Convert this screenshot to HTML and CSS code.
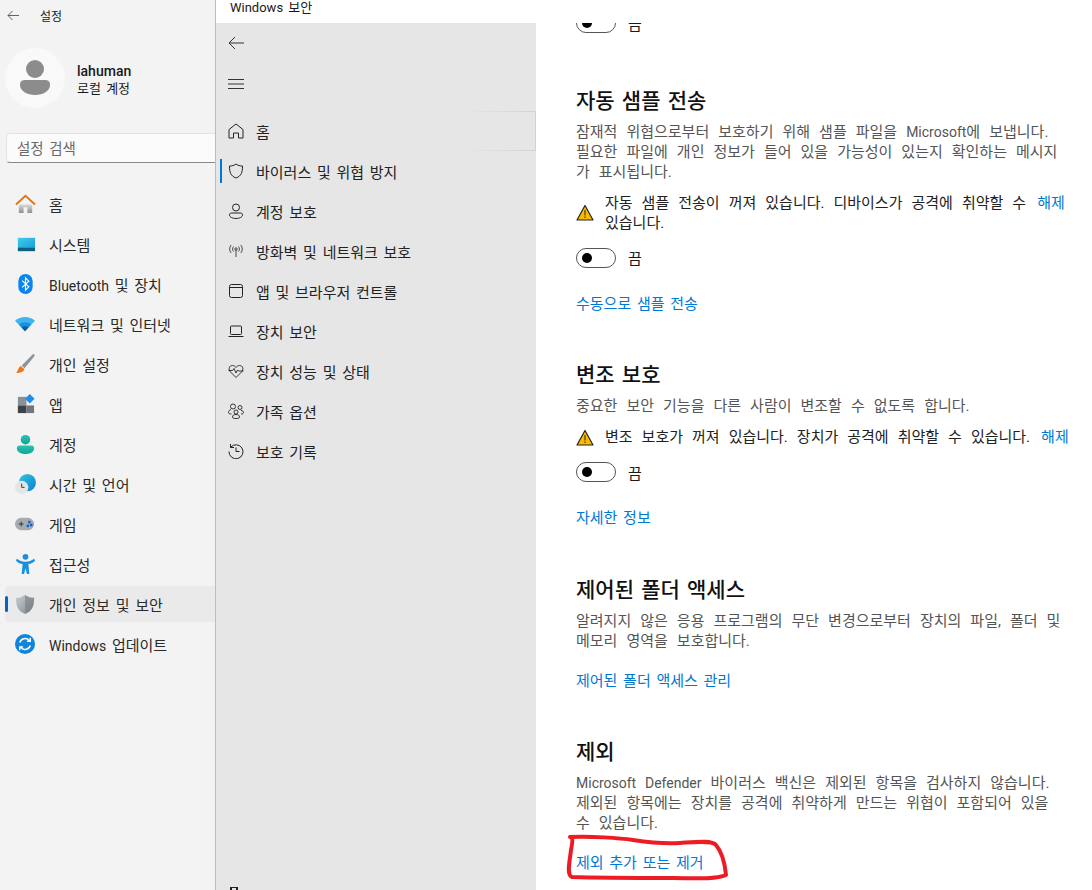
FILE: index.html
```html
<!DOCTYPE html>
<html lang="ko">
<head>
  <meta charset="UTF-8" />
  <title>Windows 보안</title>
  <link rel="stylesheet" href="styles.css">
</head>
<body>
  <svg class="defs" width="0" height="0">
    <defs>
      <linearGradient id="gHome" x1="0" y1="0" x2="0" y2="1"><stop offset="0" stop-color="#d9d9d9"/><stop offset="1" stop-color="#8f8f8f"/></linearGradient>
      <linearGradient id="gSys" x1="0" y1="0" x2="1" y2="1"><stop offset="0" stop-color="#3fd0e8"/><stop offset="1" stop-color="#1b9fdc"/></linearGradient>
      <linearGradient id="gTeal" x1="0" y1="0" x2="0" y2="1"><stop offset="0" stop-color="#27c3b4"/><stop offset="1" stop-color="#10a593"/></linearGradient>
      <linearGradient id="gShield" x1="0" y1="0" x2="1" y2="1"><stop offset="0" stop-color="#c9ced2"/><stop offset="1" stop-color="#7f878d"/></linearGradient>
      <linearGradient id="gGlobe" x1="0" y1="0" x2="1" y2="1"><stop offset="0" stop-color="#2fc6dc"/><stop offset="1" stop-color="#0f7fd0"/></linearGradient>
    </defs>
  </svg>

  <div class="layout">
    <aside class="settings">
      <div class="titlebar">
        <svg class="ic-back" viewBox="0 0 14 12"><path d="M13 6H1M6 1 1 6l5 5" fill="none" stroke="#555" stroke-width="1"/></svg>
        <span>설정</span>
      </div>
      <div class="profile">
        <div class="avatar">
          <svg viewBox="0 0 30 36" width="30" height="36"><circle cx="15" cy="9" r="9" fill="#8c8c8c"/><path d="M0 25c0-4 2-5 6-5h18c4 0 6 1 6 5 0 6-7 10-15 10S0 31 0 25z" fill="#8c8c8c"/></svg>
        </div>
        <div class="who">
          <b>lahuman</b>
          <span>로컬 계정</span>
        </div>
      </div>
      <div class="search">설정 검색</div>
      <nav class="set-nav">
        <a class="set-item">
          <svg viewBox="0 0 22 22"><path d="M4 11v9h5v-6h4v6h5v-9z" fill="url(#gHome)"/><path d="M1 11 11 2l10 9" fill="none" stroke="#e8750c" stroke-width="2"/></svg>
          <span>홈</span>
        </a>
        <a class="set-item">
          <svg viewBox="0 0 22 22"><rect x="3" y="4" width="18" height="10" fill="url(#gSys)"/><rect x="3" y="14" width="18" height="4" fill="#0f5f80"/></svg>
          <span>시스템</span>
        </a>
        <a class="set-item">
          <svg viewBox="0 0 22 22"><rect x="3.5" y="0" width="15" height="21" rx="7.5" fill="#0a84f0"/><path d="m7.5 7 7 6.5L11 17V4l3.5 3.5-7 6.5" fill="none" stroke="#fff" stroke-width="1.2"/></svg>
          <span><span class="en">Bluetooth</span> 및 장치</span>
        </a>
        <a class="set-item">
          <svg viewBox="0 0 22 22"><path d="M0 7c6-5 15-5 21 0L10.5 18z" fill="#40b4ee"/><path d="M4 11c4-3 9-3 13 0l-6.500 7z" fill="#1a8fdc"/><path d="M7 14c2-1.500 5-1.500 7 0l-3.500 4z" fill="#0a5ca8"/></svg>
          <span>네트워크 및 인터넷</span>
        </a>
        <a class="set-item">
          <svg viewBox="0 0 22 22"><path d="M19 0c1 0 2 1 1.500 2L10 15l-3-3z" fill="#8f9498"/><path d="M6 12.5 10 16c-1 3-5 4-9 4 2-1 2-6 5-7.5z" fill="#ea7a22"/></svg>
          <span>개인 설정</span>
        </a>
        <a class="set-item">
          <svg viewBox="0 0 22 22"><rect x="3" y="3" width="9" height="9" fill="#8a9097"/><rect x="3" y="12" width="9" height="8" fill="#3e4247"/><rect x="12" y="12" width="8" height="8" fill="#70767c"/><path d="m15.5 0 5 5-5 5-5-5z" fill="#1f8df0"/></svg>
          <span>앱</span>
        </a>
        <a class="set-item">
          <svg viewBox="0 0 22 22"><circle cx="11" cy="6" r="5" fill="url(#gTeal)"/><path d="M2 15c0-2 1-3 3-3h12c2 0 3 1 3 3 0 4-4 6-9 6s-9-2-9-6z" fill="url(#gTeal)"/></svg>
          <span>계정</span>
        </a>
        <a class="set-item">
          <svg viewBox="0 0 22 22"><circle cx="13" cy="9" r="9" fill="url(#gGlobe)"/><circle cx="7" cy="14" r="7" fill="#e4e4e4"/><path d="M7 10v4h3" fill="none" stroke="#333" stroke-width="1"/></svg>
          <span>시간 및 언어</span>
        </a>
        <a class="set-item">
          <svg viewBox="0 0 22 22"><rect x="0" y="4" width="20" height="13" rx="6.5" fill="#a7abb0"/><path d="M4 10.5h5M6.5 8v5" stroke="#333" stroke-width="1"/><circle cx="15" cy="8.5" r="1.5" fill="#1464c8"/><circle cx="13.5" cy="12.5" r="1.5" fill="#1464c8"/><circle cx="17" cy="11.5" r="1.5" fill="#1464c8"/></svg>
          <span>게임</span>
        </a>
        <a class="set-item">
          <svg viewBox="0 0 22 22"><circle cx="11" cy="3" r="3" fill="#1a8fe0"/><path d="M2 5c3 2 5 3 9 3s6-1 9-3l1 2c-2 2-4 3-7 3.5L15 21h-2.500L11 15l-1.500 6H7l1-10.500C5 10 3 9 1 7z" fill="#1a8fe0"/></svg>
          <span>접근성</span>
        </a>
        <a class="set-item active">
          <svg viewBox="0 0 22 22"><path d="M10.500 1C14 3 16 4 20 4c0 9-2 14-9.500 17C3 18 1 13 1 4c4 0 6-1 9.500-3z" fill="url(#gShield)"/><path d="M10.500 1C14 3 16 4 20 4c0 9-2 14-9.500 17z" fill="#6f777d" opacity=".5"/></svg>
          <span>개인 정보 및 보안</span>
        </a>
        <a class="set-item">
          <svg viewBox="0 0 22 22"><circle cx="10.5" cy="10.5" r="10.5" fill="#0f86dc"/><path d="M5 9c1-4 7-6 10-2m1-3v3.500h-3.500M16 12c-1 4-7 6-10 2m-1 3v-3.500h3.500" fill="none" stroke="#fff" stroke-width="1.5"/></svg>
          <span><span class="en">Windows</span> 업데이트</span>
        </a>
      </nav>
    </aside>

    <div class="security">
      <header class="sec-title">Windows 보안</header>
      <div class="sec-body">
        <nav class="sec-nav">
          <div class="sec-tools">
            <svg viewBox="0 0 16 14" width="16" height="14"><path d="M16 7H1M7 1 1 7l6 6" fill="none" stroke="#333" stroke-width="1"/></svg>
            <svg viewBox="0 0 16 12" width="16" height="12"><path d="M0 1.5h16M0 6h16M0 10.5h16" stroke="#333" stroke-width="1"/></svg>
          </div>
          <a class="sec-item hover">
            <svg viewBox="0 0 16 16"><path d="M1 15V6.500L8 1l7 5.500V15h-4.500v-5h-5v5z" fill="none" stroke="#222" stroke-linejoin="round"/></svg>
            <span>홈</span>
          </a>
          <a class="sec-item current">
            <svg viewBox="0 0 16 16"><path d="M8 1c2 1.500 4 2 6.500 2 0 6-1 10-6.500 12C2.500 13 1.500 9 1.500 3 4 3 6 2.500 8 1z" fill="none" stroke="#222"/></svg>
            <span>바이러스 및 위협 방지</span>
          </a>
          <a class="sec-item">
            <svg viewBox="0 0 16 16"><circle cx="8" cy="4.5" r="3.5" fill="none" stroke="#222"/><path d="M1.500 12c0-1.500 1-2 2-2h9c1 0 2 .5 2 2 0 2-3 3.500-6.500 3.500S1.500 14 1.500 12z" fill="none" stroke="#222"/></svg>
            <span>계정 보호</span>
          </a>
          <a class="sec-item">
            <svg viewBox="0 0 16 16"><circle cx="8" cy="6" r="1.2" fill="none" stroke="#222" stroke-width=".8"/><path d="M8 7v7M5.500 3.500c-1.200 1.500-1.200 3.500 0 5M10.500 3.500c1.200 1.500 1.200 3.500 0 5M3.200 2c-2 2.500-2 5.500 0 8M12.800 2c2 2.500 2 5.500 0 8" fill="none" stroke="#222" stroke-width=".8"/></svg>
            <span>방화벽 및 네트워크 보호</span>
          </a>
          <a class="sec-item">
            <svg viewBox="0 0 16 16"><rect x="1.5" y="1.5" width="13" height="13" rx="2" fill="none" stroke="#222"/><path d="M1.5 4.5h13" stroke="#222"/></svg>
            <span>앱 및 브라우저 컨트롤</span>
          </a>
          <a class="sec-item">
            <svg viewBox="0 0 16 16"><rect x="2.5" y="3" width="11" height="8.5" rx="1" fill="none" stroke="#222"/><path d="M.5 13.5h15" stroke="#222"/></svg>
            <span>장치 보안</span>
          </a>
          <a class="sec-item">
            <svg viewBox="0 0 16 16"><path d="M8 14.500 2.500 9C0 6.500 1 2.500 4.500 2.500c1.500 0 2.700.8 3.500 2 .8-1.200 2-2 3.500-2C15 2.500 16 6.500 13.500 9z" fill="none" stroke="#222" stroke-width=".9"/><path d="M.5 7.500h4l1.500-2 2 4.500 1.500-3 1 1h5" fill="none" stroke="#222" stroke-width=".9"/></svg>
            <span>장치 성능 및 상태</span>
          </a>
          <a class="sec-item">
            <svg viewBox="0 0 16 16"><circle cx="5" cy="3.5" r="2.5" fill="none" stroke="#222" stroke-width=".9"/><circle cx="12" cy="4.5" r="2" fill="none" stroke="#222" stroke-width=".9"/><circle cx="8" cy="9" r="2" fill="none" stroke="#222" stroke-width=".9"/><path d="M3 6.500C1.500 7 .5 8 .5 9.500c0 1 1 1.500 3 1.500M13 7.500c1.500 0 2.500 1 2.500 2s-1 1.500-2.500 1.500M4.500 14c0-1.500 1-2.500 3.500-2.500s3.500 1 3.500 2.500-2 1.500-3.500 1.500-3.500 0-3.500-1.500z" fill="none" stroke="#222" stroke-width=".9"/></svg>
            <span>가족 옵션</span>
          </a>
          <a class="sec-item">
            <svg viewBox="0 0 16 16"><path d="M2.500 1v3.500H6M2.700 4.200A7 7 0 1 1 1 8.500" fill="none" stroke="#222"/><path d="M8 4.500V8.500h3.500" fill="none" stroke="#222"/></svg>
            <span>보호 기록</span>
          </a>
          <svg class="sec-gear" viewBox="0 0 16 16" width="16" height="16"><rect x="3" y="0" width="6" height="8" fill="none" stroke="#222" stroke-width="2"/></svg>
        </nav>

        <main class="panel">
          <div class="toggle-row first">
            <span class="toggle"></span><span>끔</span>
          </div>

          <section class="block">
            <h2>자동 샘플 전송</h2>
            <p>잠재적 위협으로부터 보호하기 위해 샘플 파일을 <span class="en">Microsoft</span>에 보냅니다.<br>필요한 파일에 개인 정보가 들어 있을 가능성이 있는지 확인하는 메시지<br>가 표시됩니다.</p>
            <div class="warn">
              <svg viewBox="0 0 18 17" width="18" height="17"><path d="M9 1.500 17 16H1z" fill="#fbb900" stroke="#222" stroke-width="1.2" stroke-linejoin="round"/><path d="M9 6v5.500M9 12.500v1.500" stroke="#222"/></svg>
              <span class="warn-text">자동 샘플 전송이 꺼져 있습니다. 디바이스가 공격에 취약할 수<br>있습니다.</span>
              <a class="lnk">해제</a>
            </div>
            <div class="toggle-row">
              <span class="toggle"></span><span>끔</span>
            </div>
            <a class="lnk action">수동으로 샘플 전송</a>
          </section>

          <section class="block">
            <h2>변조 보호</h2>
            <p>중요한 보안 기능을 다른 사람이 변조할 수 없도록 합니다.</p>
            <div class="warn">
              <svg viewBox="0 0 18 17" width="18" height="17"><path d="M9 1.500 17 16H1z" fill="#fbb900" stroke="#222" stroke-width="1.2" stroke-linejoin="round"/><path d="M9 6v5.500M9 12.500v1.500" stroke="#222"/></svg>
              <span class="warn-text">변조 보호가 꺼져 있습니다. 장치가 공격에 취약할 수 있습니다.</span>
              <a class="lnk">해제</a>
            </div>
            <div class="toggle-row">
              <span class="toggle"></span><span>끔</span>
            </div>
            <a class="lnk action">자세한 정보</a>
          </section>

          <section class="block">
            <h2>제어된 폴더 액세스</h2>
            <p>알려지지 않은 응용 프로그램의 무단 변경으로부터 장치의 파일, 폴더 및<br>메모리 영역을 보호합니다.</p>
            <a class="lnk action">제어된 폴더 액세스 관리</a>
          </section>

          <section class="block">
            <h2>제외</h2>
            <p><span class="en">Microsoft Defender</span> 바이러스 백신은 제외된 항목을 검사하지 않습니다.<br>제외된 항목에는 장치를 공격에 취약하게 만드는 위협이 포함되어 있을<br>수 있습니다.</p>
            <a class="lnk action">제외 추가 또는 제거</a>
          </section>
        </main>
      </div>
    </div>
  </div>

  <svg class="scribble" viewBox="0 0 1092 890" width="1092" height="890">
    <path d="M570 837C590 836 620 838 633 840S665 844 680 843 712 840 716 845C722 852 725 865 726 875 715 880 690 878 673 878 640 878 600 878 572 877 566 875 570 860 571 850 572 845 573 840 572 838" fill="none" stroke="#ed1c24" stroke-width="4" stroke-linecap="round" stroke-linejoin="round"/>
  </svg>
</body>
</html>
```

FILE: styles.css
```css
html, body {
  margin: 0;
  height: 890px;
  overflow: hidden;
}
body {
  position: relative;
  font-family: Roboto, "Noto Sans CJK KR", sans-serif;
  font-size: 15px;
  word-spacing: 2px;
  color: #1a1a1a;
  background: #fff;
}
.en {
  font-size: 14px;
}
.defs {
  position: absolute;
}
.layout {
  display: grid;
  grid-template-columns: 216px 1fr;
  height: 890px;
}

/* settings window */
.settings {
  background: #f3f3f3;
  border-right: 1px solid #bdbdbd;
  box-sizing: border-box;
  padding-left: 5px;
}
.titlebar {
  display: flex;
  align-items: center;
  height: 30px;
  font-size: 12px;
  padding-left: 2px;
  gap: 20px;
}
.ic-back {
  width: 13px;
  height: 11px;
}
.profile {
  display: flex;
  align-items: center;
  gap: 12px;
  height: 60px;
  margin-top: 18px;
}
.avatar {
  width: 60px;
  height: 60px;
  border-radius: 50%;
  background: #f9f9f9;
  display: flex;
  align-items: center;
  justify-content: center;
}
.who {
  display: flex;
  flex-direction: column;
  padding-top: 3px;
  font-size: 13px;
  line-height: 17px;
}
.who b {
  font-weight: 500;
  font-size: 14px;
}
.search {
  height: 30px;
  margin: 25px 0 0 1px;
  padding: 1px 0 0 10px;
  line-height: 29px;
  font-size: 14.5px;
  color: #6a6a6a;
  background: #fbfbfb;
  border: 1px solid #e4e4e4;
  border-bottom-color: #8a8a8a;
  border-right: none;
  border-radius: 4px 0 0 4px;
  box-sizing: border-box;
}
.set-nav {
  display: flex;
  flex-direction: column;
  margin-top: 21px;
}
.set-item {
  position: relative;
  display: flex;
  align-items: center;
  gap: 13px;
  height: 40px;
  padding-left: 10px;
  color: #2a2a2a;
}
.set-item svg {
  width: 21px;
  height: 21px;
  flex: none;
}
.set-item.active {
  height: 36px;
  margin: 2px 0;
  background: #eaeaea;
  border-radius: 4px 0 0 4px;
}
.set-item.active::after {
  content: "";
  position: absolute;
  left: 0;
  top: 10px;
  width: 3px;
  height: 16px;
  border-radius: 2px;
  background: #0067c0;
}

/* security window */
.security {
  display: flex;
  flex-direction: column;
  min-width: 0;
}
.sec-title {
  height: 23px;
  padding-left: 14px;
  font-size: 13px;
  line-height: 15px;
  background: #fff;
  flex: none;
}
.sec-body {
  display: grid;
  grid-template-columns: 320px 1fr;
  flex: 1;
  min-height: 0;
}
.sec-nav {
  position: relative;
  background: #e6e6e6;
}
.sec-tools {
  display: flex;
  flex-direction: column;
  gap: 28px;
  padding: 13px 0 0 12px;
  height: 75px;
}
.sec-item {
  position: relative;
  display: flex;
  align-items: center;
  gap: 12px;
  height: 40px;
  padding-left: 12px;
  color: #222;
}
.sec-item svg {
  width: 16px;
  height: 16px;
  flex: none;
}
.sec-item.hover::after {
  content: "";
  position: absolute;
  right: 0;
  top: 0;
  bottom: 0;
  width: 70px;
  border: 1px solid;
  border-left: none;
  border-image: linear-gradient(to right, #e6e6e6, #d2d2d2) 1;
}
.sec-item.current::before {
  content: "";
  position: absolute;
  left: 4px;
  top: 8px;
  width: 2px;
  height: 24px;
  background: #0078d4;
}
.sec-gear {
  position: absolute;
  left: 12px;
  bottom: -13px;
}

.panel {
  padding-left: 40px;
  overflow: hidden;
  min-width: 0;
}
.toggle-row {
  display: flex;
  align-items: center;
  gap: 12px;
  height: 20px;
}
.toggle-row.first {
  margin-top: -10px;
}
.toggle {
  position: relative;
  width: 40px;
  height: 20px;
  box-sizing: border-box;
  border: 1px solid #555;
  border-radius: 10px;
}
.toggle::after {
  content: "";
  position: absolute;
  left: 5px;
  top: 4px;
  width: 10px;
  height: 10px;
  border-radius: 50%;
  background: #000;
}
.block {
  margin-top: 47.5px;
}
.toggle-row.first + .block {
  margin-top: 53.5px;
}
.block h2 {
  margin: 0;
  font-size: 21px;
  font-weight: 500;
  line-height: 28px;
  color: #111;
}
.block p {
  margin: 7px 0 0;
  line-height: 20px;
  color: #555;
  white-space: nowrap;
  word-spacing: 5.3px;
}
.warn {
  display: flex;
  align-items: center;
  gap: 11px;
  margin-top: 11px;
  line-height: 20px;
  white-space: nowrap;
  word-spacing: 5.3px;
}
.warn svg {
  flex: none;
}
.warn-text {
  color: #222;
}
.lnk {
  color: #0078d4;
}
.warn .lnk {
  align-self: flex-start;
}
.warn + .toggle-row {
  margin-top: 15px;
}
.action {
  display: block;
  line-height: 20px;
  margin-top: 20px;
}
.toggle-row + .action {
  margin-top: 26px;
}

.scribble {
  position: absolute;
  left: 0;
  top: 0;
  pointer-events: none;
}
```
